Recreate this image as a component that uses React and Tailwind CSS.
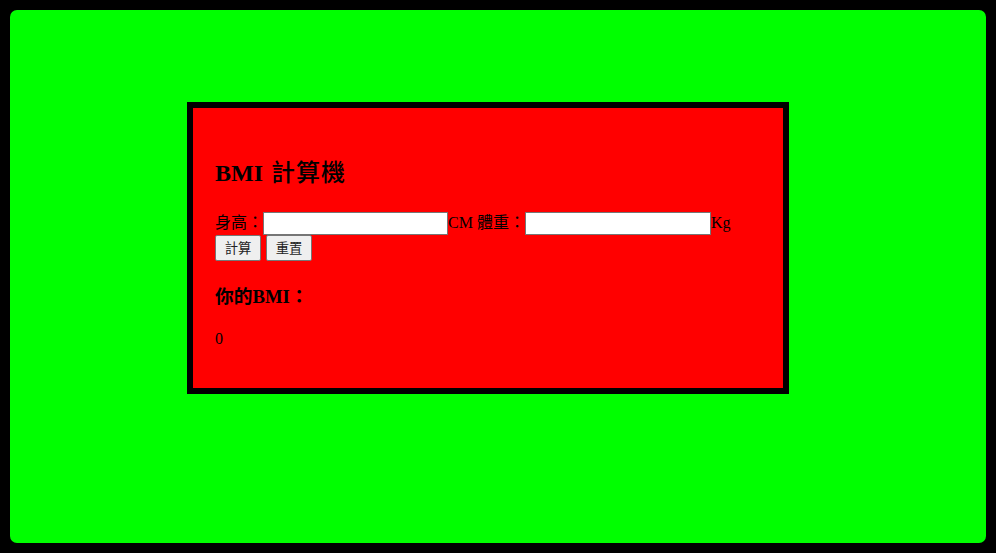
const font = "font-['Liberation_Serif','Noto_Sans_CJK_TC',serif]";

const Field = ({ className = "" }) => (
  <input
    type="text"
    className={`h-[23px] bg-white border border-[#767676] outline-none ${className}`}
  />
);

const Btn = ({ children }) => (
  <button className="h-[26px] w-[46px] bg-[#efefef] border border-[#767676] rounded-[2px] text-[13.33px] text-[#222] font-['Noto_Sans_CJK_TC',sans-serif] leading-none">
    {children}
  </button>
);

const App = () => {
  return (
    <div className={`min-h-screen bg-black p-[10px] ${font}`}>
      <div className="h-[533px] bg-[#00ff00] rounded-[7px] pt-[92px] pl-[177px]">
        <div className="w-[602px] h-[292px] border-[6px] border-black bg-[#ff0000] pl-[22px] pt-[51px] text-black">
          <h2 className="text-[24px] leading-[28px] font-bold">
            BMI <span className="font-medium tracking-[1px] ml-[2px]">計算機</span>
          </h2>

          <div className="mt-[24px] h-[24px] flex items-center text-[16px] leading-[20px] whitespace-nowrap">
            <span>身高：</span>
            <Field className="w-[185px]" />
            <span>CM 體重：</span>
            <Field className="w-[186px]" />
            <span>Kg</span>
          </div>

          <div className="flex gap-[5px]">
            <Btn>計算</Btn>
            <Btn>重置</Btn>
          </div>

          <h3 className="mt-[25px] text-[18.72px] leading-[22px] font-bold">你的BMI：</h3>

          <p className="mt-[21px] text-[16px] leading-[20px]">0</p>
        </div>
      </div>
    </div>
  );
};

export default App;
